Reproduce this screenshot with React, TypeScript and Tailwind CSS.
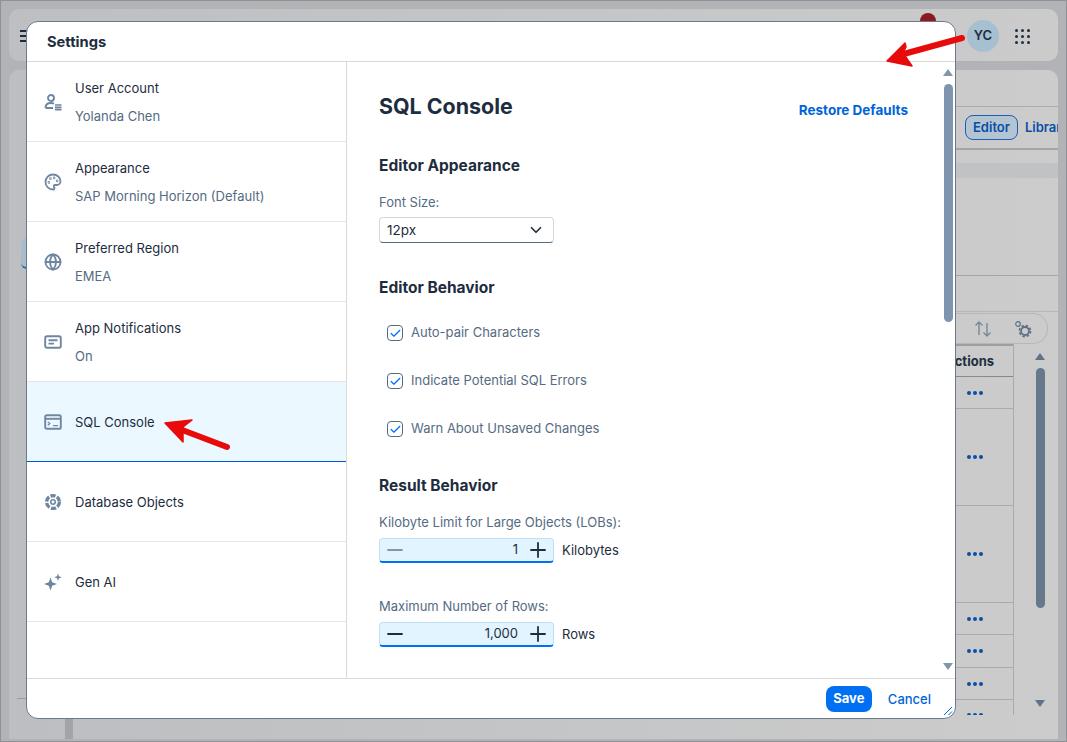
import { Globe, Palette, Minus, Plus, ChevronDown, Check } from "lucide-react";
import type { ReactNode } from "react";

function UserIcon() {
  return (
    <svg width="18" height="18" viewBox="0 0 18 18" fill="none" stroke="#6f86a1" strokeWidth="1.9">
      <circle cx="7" cy="5" r="3" />
      <path d="M1.5 15c0-3.5 2-5 5.5-5 1.2 0 2.2.2 3 .6M1.5 15H9" />
      <path d="M11 12h6.5M11 14.4h6.5M11 16.6h6.5" strokeWidth="1.7" />
    </svg>
  );
}

function NotifIcon() {
  return (
    <svg width="18" height="18" viewBox="0 0 18 18" fill="none" stroke="#6f86a1" strokeWidth="1.9">
      <rect x="1.2" y="3.2" width="15.6" height="11.6" rx="1.8" />
      <path d="M4.5 7.2h9M4.5 10.6h5.5" />
    </svg>
  );
}

function ConsoleIcon() {
  return (
    <svg width="18" height="18" viewBox="0 0 18 18" fill="none" stroke="#6f86a1" strokeWidth="1.9">
      <rect x="1.2" y="2.2" width="15.6" height="13.6" rx="1.6" />
      <path d="M1.5 5.8h15" />
      <path d="M3.8 9l2 1.6-2 1.6M9 12.6h5" strokeWidth="1.3" />
    </svg>
  );
}

function ObjectsIcon() {
  return (
    <svg width="18" height="18" viewBox="0 0 18 18" fill="none" stroke="#6f86a1">
      <circle cx="9" cy="9" r="6.4" strokeWidth="3.4" strokeDasharray="5.2 1.5" />
      <circle cx="9" cy="9" r="2.2" strokeWidth="1.6" />
    </svg>
  );
}

function SparkIcon() {
  return (
    <svg width="18" height="18" viewBox="0 0 18 18" fill="#6f86a1">
      <path d="M6.5 4.5l1.7 4.8 4.8 1.7-4.8 1.7-1.7 4.8-1.7-4.8L0 11l4.8-1.7z" />
      <path d="M14 .5l1 2.8 2.8 1-2.8 1-1 2.8-1-2.8-2.8-1 2.8-1z" />
    </svg>
  );
}

function GearsIcon() {
  return (
    <svg width="18" height="18" viewBox="0 0 18 18" fill="none" stroke="#5f7083">
      <circle cx="4" cy="4" r="2.3" strokeWidth="1.2" />
      <circle cx="11" cy="11" r="4" strokeWidth="1.8" />
      <circle cx="11" cy="11" r="5.6" strokeWidth="1.6" strokeDasharray="2.4 2" />
    </svg>
  );
}

function NavRow({ icon, title, sub, active }: { icon: ReactNode; title: string; sub?: string; active?: boolean }) {
  return (
    <div
      className={
        active
          ? "flex h-20 items-center border-b border-[#0057d2] bg-[#ebf8ff] pl-[17px]"
          : "flex h-20 items-center border-b border-[#e5e5e5] pl-[17px]"
      }
    >
      <div className="flex w-[31px] shrink-0 items-center">{icon}</div>
      <div className="flex flex-col gap-[10px]">
        <div className="text-[13px] leading-[18px] text-[#1d2d3e]">{title}</div>
        {sub && <div className="text-[13px] leading-[18px] text-[#556b82]">{sub}</div>}
      </div>
    </div>
  );
}

function CheckRow({ label }: { label: string }) {
  return (
    <div className="flex h-12 items-center pl-2">
      <div className="flex h-4 w-4 items-center justify-center rounded-[4px] border border-[#556b82] bg-white">
        <Check size={13} strokeWidth={2.2} className="text-[#0070f2]" />
      </div>
      <span className="ml-2 text-[13px] text-[#556b82]">{label}</span>
    </div>
  );
}

function Stepper({ value, unit, dim }: { value: string; unit: string; dim?: boolean }) {
  return (
    <div className="flex items-center">
      <div className="flex h-[25px] w-[175px] items-center rounded-[4px] border border-[#bfe0fb] border-b-2 border-b-[#0070f2] bg-[#e1f4ff] pl-[3px] pr-[3px]">
        <Minus size={24} strokeWidth={1.8} className={dim ? "shrink-0 text-[#8396a8]" : "shrink-0 text-[#1d2d3e]"} />
        <span className="flex-1 pr-2 text-right text-[13px] text-[#1d2d3e]">{value}</span>
        <Plus size={24} strokeWidth={1.8} className="shrink-0 text-[#1d2d3e]" />
      </div>
      <span className="ml-2 text-[13px] text-[#1d2d3e]">{unit}</span>
    </div>
  );
}

function Dots() {
  return (
    <div className="flex gap-[2px] pl-[55px]">
      <div className="h-1 w-1 rounded-full bg-[#0a4ea8]" />
      <div className="h-1 w-1 rounded-full bg-[#0a4ea8]" />
      <div className="h-1 w-1 rounded-full bg-[#0a4ea8]" />
    </div>
  );
}

function BgRow({ h }: { h: string }) {
  return (
    <div className={`${h} flex shrink-0 items-center border-b border-[#a9acaf]`}>
      <Dots />
    </div>
  );
}

export default function App() {
  return (
    <div className="relative flex h-[742px] w-[1067px] flex-col gap-[9px] overflow-hidden border border-[#8f9296] bg-[#b1b3b6] px-2 pt-2 pb-[2px] font-['Inter',sans-serif]">
      {/* app shell, dimmed behind the dialog */}
      <div className="flex h-[52px] shrink-0 items-center rounded-[10px] bg-linear-to-r from-[#bdbfc2] to-[#cbcbcb] pl-[11px] pr-[28px] pt-[2px]">
        <div className="flex w-[14px] flex-col gap-[3px]">
          <div className="h-[2px] bg-[#1d2d3e]" />
          <div className="h-[2px] bg-[#1d2d3e]" />
          <div className="h-[2px] bg-[#1d2d3e]" />
        </div>
        <div className="ml-auto mb-[30px] mr-[31px] h-4 w-4 rounded-full bg-[#8a1a1f]" />
        <div className="mr-[16px] flex h-8 w-8 items-center justify-center rounded-full bg-[#a6bfd1] text-[13px] font-semibold text-[#1d2d3e]">
          YC
        </div>
        <div className="grid grid-cols-3 gap-[3px]">
          {Array.from({ length: 9 }).map((_, i) => (
            <div key={i} className="h-[3px] w-[3px] rounded-full bg-[#1d2d3e]" />
          ))}
        </div>
      </div>

      <div className="flex flex-1 overflow-hidden rounded-t-[10px] bg-linear-to-r from-[#bcbec1] to-[#cccccc]">
        <div className="flex w-[56px] shrink-0 flex-col">
          <div className="mt-[168px] ml-[12px] h-[31px] w-[40px] rounded-[6px] border-b-2 border-[#2a62a8] bg-[#a9bccb]" />
          <div className="mt-[429px] ml-[8px] h-px w-[40px] bg-[#9a9da0]" />
        </div>
        <div className="w-2 shrink-0 bg-[#a1a5a9]" />
        <div className="flex min-w-0 flex-1 flex-col">
          <div className="h-[37px] shrink-0 border-b border-[#a9acaf]" />
          <div className="flex h-[43px] shrink-0 items-center justify-end overflow-hidden border-b-2 border-[#a3a6a9]">
            <div className="flex h-[26px] w-[93px] shrink-0 items-center">
              <div className="rounded-[8px] border border-[#1c5eb0] bg-[#b3c4d3] px-[7px] py-[2px] text-[13px] font-semibold text-[#0a4ea8]">
                Editor
              </div>
              <div className="ml-[7px] whitespace-nowrap text-[13px] font-semibold text-[#0a4ea8]">Library</div>
            </div>
          </div>
          <div className="mt-[13px] h-[15px] shrink-0 bg-[#c0c2c4]" />
          <div className="h-[98px] shrink-0 border-b border-[#a3a6a9]" />
          <div className="h-9 shrink-0 border-b border-[#b5b7b9]" />
          <div className="flex shrink-0 justify-end pr-[10px] pt-px">
            <div className="flex h-[31px] w-[120px] items-center justify-end gap-[22px] rounded-r-[15px] border border-l-0 border-[#b5b7b9] pr-[15px]">
              <svg width="18" height="18" viewBox="0 0 18 18" fill="none" stroke="#76889a" strokeWidth="1.4">
                <path d="M5 15V2M1.5 5.5L5 2l3.5 3.5M13 3v13M9.5 12.5L13 16l3.5-3.5" />
              </svg>
              <GearsIcon />
            </div>
          </div>
          <div className="flex min-h-0 flex-1 justify-end">
            <div className="flex h-[371px] w-[102px] shrink-0 flex-col overflow-hidden border-r border-[#a9acaf]">
              <div className="flex h-[33px] shrink-0 items-center justify-end border-t-2 border-b border-t-[#9b9ea2] border-b-[#7f8a96] pt-[2px] pr-[19px] text-[13px] font-bold whitespace-nowrap text-[#1d2d3e]">
                Actions
              </div>
              <BgRow h="h-8" />
              <BgRow h="h-[97px]" />
              <BgRow h="h-[97px]" />
              <BgRow h="h-8" />
              <BgRow h="h-[33px]" />
              <BgRow h="h-8" />
              <div className="h-[15px] shrink-0 pt-[13px]">
                <Dots />
              </div>
            </div>
            <div className="flex w-[44px] shrink-0 flex-col items-center pl-2 pt-[9px]">
              <div className="h-0 w-0 border-x-[5px] border-b-[7px] border-x-transparent border-b-[#5f7387]" />
              <div className="mt-[8px] h-[240px] w-[9px] rounded-full bg-[#66788b]" />
              <div className="mt-[92px] h-0 w-0 border-x-[5px] border-t-[7px] border-x-transparent border-t-[#5f7387]" />
            </div>
          </div>
        </div>
      </div>

      {/* settings dialog */}
      <div className="absolute left-[25px] top-[20px] flex h-[698px] w-[930px] flex-col overflow-hidden rounded-[12px] border border-[#6a7a8a] bg-white">
        <div className="flex h-10 shrink-0 items-center border-b border-[#d9d9d9] pl-5 pt-[2px] text-[14.7px] font-bold text-[#1d2d3e]">
          Settings
        </div>
        <div className="flex min-h-0 flex-1">
          <div className="w-[320px] shrink-0 border-r border-[#d9d9d9]">
            <NavRow icon={<UserIcon />} title="User Account" sub="Yolanda Chen" />
            <NavRow icon={<Palette size={18} strokeWidth={2.4} className="text-[#6f86a1]" />} title="Appearance" sub="SAP Morning Horizon (Default)" />
            <NavRow icon={<Globe size={18} strokeWidth={2.4} className="text-[#6f86a1]" />} title="Preferred Region" sub="EMEA" />
            <NavRow icon={<NotifIcon />} title="App Notifications" sub="On" />
            <NavRow icon={<ConsoleIcon />} title="SQL Console" active />
            <NavRow icon={<ObjectsIcon />} title="Database Objects" />
            <NavRow icon={<SparkIcon />} title="Gen AI" />
          </div>
          <div className="flex min-w-0 flex-1">
            <div className="flex-1 pl-8 pr-[31px]">
              <div className="mt-[30px] flex items-start justify-between">
                <div className="text-[21.4px] leading-7 font-bold text-[#1d2d3e]">SQL Console</div>
                <div className="mt-2 text-[13.5px] leading-5 font-bold text-[#0064d9]">Restore Defaults</div>
              </div>
              <div className="mt-[36px] text-[15.5px] leading-5 font-bold text-[#1d2d3e]">Editor Appearance</div>
              <div className="mt-[18px] text-[13px] leading-4 text-[#556b82]">Font Size:</div>
              <div className="mt-[7px] flex h-[26px] w-[175px] items-center justify-between rounded-[4px] border border-[#d0d7de] border-b-[#556b82] pl-[7px] pr-[8px] text-[13.5px] text-[#1d2d3e]">
                12px
                <ChevronDown size={18} strokeWidth={2.2} />
              </div>
              <div className="mt-[35px] text-[15.5px] leading-5 font-bold text-[#1d2d3e]">Editor Behavior</div>
              <div className="mt-[11px]">
                <CheckRow label="Auto-pair Characters" />
                <CheckRow label="Indicate Potential SQL Errors" />
                <CheckRow label="Warn About Unsaved Changes" />
              </div>
              <div className="mt-[23px] text-[15.5px] leading-5 font-bold text-[#1d2d3e]">Result Behavior</div>
              <div className="mt-[18px] mb-2 text-[13px] leading-4 text-[#556b82]">Kilobyte Limit for Large Objects (LOBs):</div>
              <Stepper value="1" unit="Kilobytes" dim />
              <div className="mt-[35px] mb-2 text-[13px] leading-4 text-[#556b82]">Maximum Number of Rows:</div>
              <Stepper value="1,000" unit="Rows" />
            </div>
            <div className="flex w-[16px] shrink-0 flex-col items-center pl-[2px] pt-[7px]">
              <div className="h-0 w-0 border-x-[5px] border-b-[7px] border-x-transparent border-b-[#8396a8]" />
              <div className="mt-[8px] h-[238px] w-[9px] rounded-full bg-[#7f95ad]" />
              <div className="mt-auto mb-[8px] h-0 w-0 border-x-[5px] border-t-[7px] border-x-transparent border-t-[#8396a8]" />
            </div>
          </div>
        </div>
        <div className="relative flex h-10 shrink-0 items-center justify-end gap-[16px] border-t border-[#d9d9d9] pr-6">
          <div className="flex h-[26px] w-[46px] items-center justify-center rounded-[8px] bg-[#0070f2] text-[13px] font-bold text-white">
            Save
          </div>
          <div className="mt-[2px] text-[13px] font-medium text-[#0064d9]">Cancel</div>
          <svg className="absolute right-[2px] bottom-[2px]" width="10" height="10" viewBox="0 0 10 10" stroke="#0064d9" strokeWidth="1">
            <path d="M1 9l8-8M5.5 9L9 5.5" />
          </svg>
        </div>
      </div>

      {/* annotation arrows */}
      <svg className="absolute left-[880px] top-[30px]" width="90" height="42" viewBox="0 0 90 42" fill="#e80b0b">
        <path d="M6 30L24 12l1 4-3 6 9 13z" stroke="#e80b0b" strokeWidth="1.5" strokeLinejoin="round" />
        <path d="M19 24L81 7" stroke="#e80b0b" strokeWidth="6" strokeLinecap="round" />
      </svg>
      <svg className="absolute left-[160px] top-[415px]" width="75" height="40" viewBox="0 0 75 40" fill="#e80b0b">
        <path d="M4 7l27-3-9 7 0 15z" stroke="#e80b0b" strokeWidth="1.5" strokeLinejoin="round" />
        <path d="M16 12L66 31" stroke="#e80b0b" strokeWidth="6" strokeLinecap="round" />
      </svg>
    </div>
  );
}
